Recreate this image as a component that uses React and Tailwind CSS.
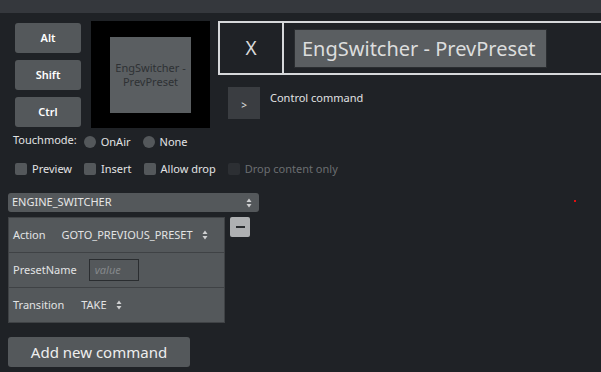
import { useState } from "react";

const font = { fontFamily: '"Noto Sans", "Open Sans", sans-serif' };

const Arrows = ({ className = "" }) => (
  <svg viewBox="0 0 6 10" className={`w-[6px] h-[10px] ${className}`} fill="currentColor">
    <path d="M3 0.5 L5.5 4 H0.5 Z" />
    <path d="M3 9.5 L5.5 6 H0.5 Z" />
  </svg>
);

const ModKey = ({ label }) => (
  <button className="w-[66px] h-[30px] rounded-[3px] bg-[#54585b] text-white text-[11px] font-semibold">
    {label}
  </button>
);

const Radio = ({ label }) => (
  <label className="flex items-center gap-[5px]">
    <span className="w-[12px] h-[12px] rounded-full bg-[#54585b]" />
    <span>{label}</span>
  </label>
);

const Check = ({ label, disabled }) => (
  <label className={`flex items-center gap-[5px] ${disabled ? "text-[#6b6e71]" : ""}`}>
    <span className={`w-[12px] h-[12px] rounded-[2px] ${disabled ? "bg-[#2c2f33]" : "bg-[#54585b]"}`} />
    <span>{label}</span>
  </label>
);

export default function App() {
  const [name] = useState("EngSwitcher - PrevPreset");

  return (
    <div className="w-[601px] h-[372px] bg-[#1f2226] text-[#e2e3e4] overflow-hidden relative text-[11px]" style={font}>
      <div className="h-[13px] bg-[#35383d]" />

      {/* top area */}
      <div className="flex mt-[8px]">
        <div className="flex flex-col gap-[7px] ml-[15px] mt-[2px]">
          <ModKey label="Alt" />
          <ModKey label="Shift" />
          <ModKey label="Ctrl" />
        </div>

        <div className="ml-[10px] w-[119px] h-[107px] bg-black flex items-center justify-center">
          <div className="w-[81px] h-[76px] bg-[#5a5e61] flex items-center justify-center text-center text-[11px] leading-[14px] text-[#2e3134]">
            EngSwitcher -<br />PrevPreset
          </div>
        </div>

        <div className="ml-[8px] flex-1 flex flex-col">
          <div className="h-[54px] border-2 border-r-0 border-[#d6d8da] flex">
            <div className="w-[64px] border-r-2 border-[#d6d8da] flex items-center justify-center text-[19px] text-[#d8d9da]">
              X
            </div>
            <div className="pl-[10px] pt-[6px]">
              <div className="w-[253px] h-[39px] bg-[#5a5e61] border border-[#2a2d30] flex items-center pl-[7px] text-[20px] text-[#dcdddd] whitespace-nowrap">
                {name}
              </div>
            </div>
          </div>
          <div className="flex mt-[12px] ml-[10px]">
            <button className="w-[32px] h-[32px] bg-[#3a3d41] text-[10px] text-[#e0e0e0] flex items-center justify-center pt-[4px]">
              &gt;
            </button>
            <span className="ml-[10px] mt-[3px] text-[11px] text-[#e0e1e2]">Control command</span>
          </div>
        </div>
      </div>

      {/* touchmode */}
      <div className="flex items-center mt-[4px] ml-[13px] h-[20px] gap-[12px]">
        <span className="mr-[-5px] -mt-[4px]">Touchmode:</span>
        <Radio label="OnAir" />
        <Radio label="None" />
      </div>

      {/* checkboxes */}
      <div className="flex items-center mt-[7px] ml-[15px] h-[20px] gap-[12px]">
        <Check label="Preview" />
        <Check label="Insert" />
        <Check label="Allow drop" />
        <Check label="Drop content only" disabled />
      </div>

      {/* engine select */}
      <div className="ml-[8px] mt-[14px] w-[251px] h-[19px] rounded-[3px] bg-[#54585b] flex items-center justify-between px-[4px] text-[11px] text-[#e6e6e6]">
        <span>ENGINE_SWITCHER</span>
        <Arrows className="text-[#cfd0d1] mr-[3px]" />
      </div>

      <div className="flex ml-[8px] mt-[5px] gap-[5px]">
        <div className="w-[217px] bg-[#54585b] border border-[#3f4245]">
          <div className="h-[35px] flex items-center px-[4px] border-b border-[#3f4245]">
            <span>Action</span>
            <span className="ml-[16px]">GOTO_PREVIOUS_PRESET</span>
            <Arrows className="ml-[9px] text-[#cfd0d1]" />
          </div>
          <div className="h-[35px] flex items-center px-[4px] border-b border-[#3f4245]">
            <span>PresetName</span>
            <div className="ml-[12px] w-[50px] h-[22px] border border-[#2a2d30] flex items-center px-[5px] italic text-[#85888b]">
              value
            </div>
          </div>
          <div className="h-[34px] flex items-center px-[4px]">
            <span>Transition</span>
            <span className="ml-[17px]">TAKE</span>
            <Arrows className="ml-[9px] text-[#cfd0d1]" />
          </div>
        </div>
        <button className="w-[20px] h-[20px] rounded-[2px] bg-[#aeb0b2] flex items-center justify-center">
          <span className="w-[9px] h-[2px] bg-[#2a2d30]" />
        </button>
      </div>

      <button className="ml-[8px] mt-[14px] w-[182px] h-[30px] rounded-[3px] bg-[#54585b] text-[15px] text-[#eeeeee]">
        Add new command
      </button>

      <span className="absolute left-[574px] top-[200px] w-[2px] h-[2px] bg-[#e01010]" />
    </div>
  );
}
